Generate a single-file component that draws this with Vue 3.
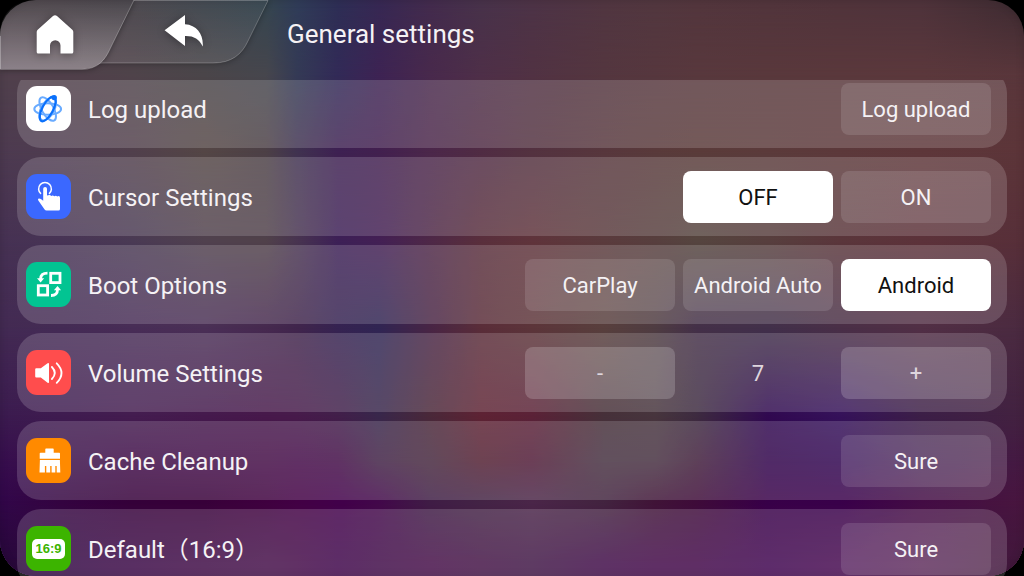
<script setup>
import { reactive } from 'vue'

// Wallpaper: horizontal colour bands that fade into each other from top to bottom.
const stops = [0, 6, 13, 20, 26, 29, 33, 37, 42, 47, 52, 59, 64, 68, 75, 82, 90, 100]
const bands = [
  { y: 1, c: '4d454a 4b444a 474349 3e444c 36454f 303c58 2e2e55 372853 432b4d 48324a 4d3346 513641 52373f 53363d 52353c 51343b 4f333b 3e2b31' },
  { y: 13, c: '50404c 50404a 4f434a 4a4549 46464d 343a55 322a57 3d2353 48294c 4e2f48 513243 54363f 56373e 58383d 59383c 5a383c 5b383c 59363b' },
  { y: 26, c: '4d3a50 4f3d50 51404c 544645 4c4046 403250 3e2152 42204f 4b274a 502c44 533240 57373d 593a3b 5a3b3a 5b3b3b 5c393b 5d373a 5c3539' },
  { y: 42, c: '463153 473455 4a3a54 50414e 50414a 483450 3d2056 432054 4e2847 592f3c 5f343b 5a3b3d 573f3e 55453f 573f3e 5a363b 5c323a 572f39' },
  { y: 57, c: '432a53 442b55 482d57 4a2f56 46294f 40254c 352351 302553 482545 5a2d39 5c353a 583f3d 4e3c42 443048 41304a 492f47 512f45 4a2a40' },
  { y: 72, c: '3b1b4f 3f1c50 441d50 451a4d 47194b 471b4b 421f4a 38274b 4a2839 5e2334 5b2237 463039 47353d 3d2b40 300950 35125a 3c1f47 432240' },
  { y: 80, c: '370e4e 3a104a 3e0a46 410c47 430c46 430a48 420c47 402145 45273d 521f32 501b37 453040 452f40 401d3a 30034b 300550 3c164a 451a42' },
  { y: 87, c: '32074a 340440 350039 380039 3f013f 420044 42004a 42084a 3f1d45 432445 4a2648 42243f 401437 3e0c39 380048 39004a 430c44 48163f' },
  { y: 98, c: '260838 330743 3a0846 3f0b46 430e48 430a48 3f054a 400b48 440e48 431346 401646 400b48 410848 410748 3f044f 45094f 4a1248 40183a' },
]
const bandStyle = (b, i) => {
  const colors = b.c.split(' ').map((hex, k) => `#${hex} ${stops[k]}%`)
  const style = { backgroundImage: `linear-gradient(90deg, ${colors.join(', ')})` }
  if (i > 0) style.maskImage = `linear-gradient(180deg, transparent ${bands[i - 1].y}%, #000 ${b.y}%)`
  return style
}

const rows = reactive([
  { icon: 'log', label: 'Log upload', buttons: ['Log upload'] },
  { icon: 'cursor', label: 'Cursor Settings', buttons: ['OFF', 'ON'], selected: 'OFF' },
  { icon: 'boot', label: 'Boot Options', buttons: ['CarPlay', 'Android Auto', 'Android'], selected: 'Android' },
  { icon: 'volume', label: 'Volume Settings', volume: 7 },
  { icon: 'cache', label: 'Cache Cleanup', buttons: ['Sure'] },
  { icon: 'ratio', label: 'Default（16:9）', buttons: ['Sure'] },
])
const pick = (row, name) => {
  if (row.selected) row.selected = name
}
</script>

<template>
  <div class="screen">
    <div class="wallpaper" aria-hidden="true">
      <div v-for="(b, i) in bands" :key="b.y" class="band" :style="bandStyle(b, i)"></div>
    </div>

    <header class="header">
      <nav class="tabs">
        <svg class="tab-shapes" viewBox="0 0 280 80" aria-hidden="true">
          <defs>
            <linearGradient id="homeFill" x1="0" y1="0" x2="0" y2="1">
              <stop offset="0" stop-color="#fff" stop-opacity="0.02" />
              <stop offset="1" stop-color="#fff" stop-opacity="0.34" />
            </linearGradient>
            <linearGradient id="backFill" x1="0" y1="0" x2="0" y2="1">
              <stop offset="0" stop-color="#fff" stop-opacity="0.03" />
              <stop offset="1" stop-color="#fff" stop-opacity="0.1" />
            </linearGradient>
            <filter id="tabShadow" x="-10%" y="-10%" width="120%" height="130%">
              <feGaussianBlur stdDeviation="3" />
            </filter>
            <clipPath id="outsideTabs">
              <path d="M134 0H280V80H0V69H82C98 69 105 60 110 49Z" />
            </clipPath>
            <clipPath id="belowBack">
              <path d="M268 0H280V80H0V69H82C91 69 98 66 102 63H213C232 63 242 54 248 41Z" />
            </clipPath>
          </defs>
          <g clip-path="url(#belowBack)">
            <path d="M134 0H268L248 41C242 54 232 63 213 63H100Z" opacity="0.4" filter="url(#tabShadow)" />
          </g>
          <g clip-path="url(#outsideTabs)">
            <path d="M134 0H268L248 41C242 54 232 63 213 63H100L110 49Z" fill="url(#backFill)" />
            <path d="M0 0H134L110 49C105 60 98 69 82 69H0Z" opacity="0.5" filter="url(#tabShadow)" />
            <path d="M130 0.5H268L248 41C242 54 232 63 213 63H90" fill="none" stroke="#fff" stroke-opacity="0.24" />
          </g>
          <path d="M0 36C0 14 14 0 36 0H134L110 49C105 60 98 69 82 69H0Z" fill="url(#homeFill)" />
          <path d="M0.5 36V69.5H82C98 69 105 60 110 49L134 0" fill="none" stroke="#fff" stroke-opacity="0.28" />
        </svg>
        <button class="tab home" type="button" aria-label="Home">
          <svg class="glyph" viewBox="0 0 40 40">
            <path fill="#fff" d="M18 1.100Q20 -0.500 22 1.100L37.300 14.700Q38.300 15.600 38.300 17V37Q38.300 38.500 36.800 38.500H25.500V30.500A5.200 5.200 0 0 0 15 30.500V38.500H3.200Q1.700 38.500 1.700 37V17Q1.700 15.600 2.700 14.700Z" />
          </svg>
        </button>
        <button class="tab back" type="button" aria-label="Back">
          <svg class="glyph" viewBox="0 0 40 40">
            <path fill="#fff" d="M0.600 15.200L21 0V9.200C33 10 39.500 19 38.800 31.500C35 24 30 20.800 21 21V31Z" />
          </svg>
        </button>
      </nav>
      <h1 class="title">General settings</h1>
    </header>

    <main class="viewport">
      <ul class="list">
        <li v-for="row in rows" :key="row.label" class="row">
          <span class="icon" :class="row.icon" aria-hidden="true">
            <svg v-if="row.icon === 'log'" viewBox="0 0 45 45" fill="none">
              <g stroke="#69abff" stroke-width="2">
                <ellipse cx="21.700" cy="23" rx="13.400" ry="5.800" />
                <ellipse cx="21.700" cy="23" rx="13.200" ry="5.800" transform="rotate(60 21.700 23)" />
                <ellipse cx="21.700" cy="23" rx="12.600" ry="6.400" transform="rotate(-60 21.700 23)" />
              </g>
              <ellipse cx="21.700" cy="23" rx="13.600" ry="5.400" stroke="#0a70fb" stroke-width="2.200" transform="rotate(-62 21.700 23)" />
              <circle cx="28.200" cy="11.600" r="2.700" fill="#0a70fb" />
            </svg>
            <svg v-else-if="row.icon === 'cursor'" viewBox="0 0 45 45">
              <path d="M15 19.900A6.400 6.400 0 1 1 23 19.900" fill="none" stroke="#fff" stroke-width="1.500" />
              <path fill="#fff" d="M17.200 14.800A1.900 1.900 0 0 1 21 14.800V21.500L23.300 21.100Q24.500 21 25.200 22Q26.700 20.800 28.300 22.200Q30 21.100 31.200 22.400Q34 21.300 34 23.700V35Q34 36.500 32.500 36.500H20.500Q19.300 36.500 18.600 35.500L12.300 26.500Q11.300 24.700 13 24.500Q14.500 24.400 17.200 26.700Z" />
            </svg>
            <svg v-else-if="row.icon === 'boot'" viewBox="0 0 45 45" fill="none" stroke="#fff" stroke-width="2.800">
              <rect x="24.700" y="11.300" width="9.300" height="9.300" />
              <rect x="12.300" y="23.700" width="9.300" height="9.300" />
              <path d="M21.500 11.200C17 11.200 14.600 13 14.600 17M25 33.500C29.500 33.500 31.500 31 31.500 27.500" />
              <path d="M11 16.300H18.200L14.600 20.500ZM27.900 28.300H35.100L31.500 24.100Z" fill="#fff" stroke="none" />
            </svg>
            <svg v-else-if="row.icon === 'volume'" viewBox="0 0 45 45">
              <path fill="#fff" d="M10.200 18.200H14.800L21.600 13.300Q23 12.500 23 14V32Q23 33.500 21.600 32.700L14.800 27.500H10.200Q9.200 27.500 9.200 26.500V19.200Q9.200 18.200 10.200 18.200Z" />
              <path d="M25.900 17Q31.700 23 25.900 29M30.700 13.300Q40.300 23 30.700 32.900" fill="none" stroke="#fff" stroke-width="1.800" stroke-linecap="round" />
            </svg>
            <svg v-else-if="row.icon === 'cache'" viewBox="0 0 45 45" fill="#fff">
              <path d="M13.700 20.700V15.500Q13.700 14.700 14.500 14.700H19.300V11.300Q19.300 10.600 20 10.600H27Q27.700 10.600 27.700 11.300V14.700H33.200Q34 14.700 34 15.500V20.700Z" />
              <path d="M13.900 22.100H33.900L34.300 34.400H30.700V28H29.300V34.400H25.600V28H24.200V34.400H20.300V28H18.900V34.400H13.500Z" />
            </svg>
            <span v-else class="ratio-badge">16:9</span>
          </span>

          <span class="label">{{ row.label }}</span>

          <div v-if="row.icon === 'volume'" class="controls volume-controls">
            <button class="btn" type="button" aria-label="Volume down" @click="row.volume--">-</button>
            <output class="value">{{ row.volume }}</output>
            <button class="btn" type="button" aria-label="Volume up" @click="row.volume++">+</button>
          </div>
          <div v-else class="controls">
            <button
              v-for="name in row.buttons"
              :key="name"
              class="btn"
              :class="{ active: row.selected === name }"
              type="button"
              @click="pick(row, name)"
            >{{ name }}</button>
          </div>
        </li>
      </ul>
    </main>
  </div>
</template>

<style>
body {
  background: #000;
}
</style>

<style scoped>
.screen {
  position: relative;
  display: flex;
  flex-direction: column;
  height: 100vh;
  overflow: hidden;
  color: #f5f2f5;
  font-family: Roboto, "Noto Sans CJK SC", sans-serif;
}
.wallpaper {
  position: absolute;
  inset: 0;
  overflow: hidden;
  border-radius: 36px;
}
.wallpaper::after {
  content: "";
  position: absolute;
  inset: 0;
  border-radius: 36px;
  box-shadow: inset 0 0 8px rgba(0, 0, 0, 0.15);
}
.band {
  position: absolute;
  inset: 0;
}
.header {
  position: relative;
  display: flex;
  flex: none;
  height: 80px;
}
.tabs {
  position: relative;
  display: flex;
  width: 280px;
}
.tab-shapes {
  position: absolute;
  inset: 0;
  width: 280px;
  height: 80px;
}
.tab {
  position: relative;
  height: 70px;
  padding: 0;
  border: 0;
  background: none;
  cursor: pointer;
}
.home {
  width: 110px;
}
.back {
  width: 148px;
}
.glyph {
  display: block;
  width: 40px;
  height: 40px;
  margin: 0 auto;
  filter: drop-shadow(0 1px 4px rgba(0, 0, 0, 0.35));
}
.title {
  margin: 0 0 0 7px;
  font-size: 26px;
  font-weight: 400;
  line-height: 68px;
}
.viewport {
  position: relative;
  flex: 1;
  min-height: 0;
  padding: 0 17px;
  overflow: hidden;
}
.list {
  display: flex;
  flex-direction: column;
  gap: 9px;
  margin: -11px 0 0;
  padding: 0;
  list-style: none;
}
.row {
  display: flex;
  align-items: center;
  box-sizing: border-box;
  height: 79px;
  padding: 0 16px 0 9px;
  border-radius: 24px;
  background: rgba(255, 255, 255, 0.16);
}
.icon {
  display: flex;
  flex: none;
  align-items: center;
  justify-content: center;
  width: 45px;
  height: 45px;
  border-radius: 11px;
}
.icon svg {
  width: 45px;
  height: 45px;
}
.log { background: #fff; }
.cursor { background: #3b68ff; }
.boot { background: #02c492; }
.volume { background: #ff4d4d; }
.cache { background: #ff8a00; }
.ratio { background: #3cb400; }
.ratio-badge {
  width: 33px;
  border-radius: 5px;
  background: #fff;
  color: #3cb400;
  font: 700 13px/20px "Liberation Sans", Arial, sans-serif;
  text-align: center;
}
.label {
  flex: 1;
  margin-left: 17px;
  padding-top: 2px;
  font-size: 24px;
  line-height: 32px;
}
.controls {
  display: flex;
  gap: 8px;
}
.btn,
.value {
  box-sizing: border-box;
  width: 150px;
  height: 52px;
  padding: 2px 0 0;
  font-family: inherit;
  font-size: 22px;
  line-height: 50px;
  text-align: center;
}
.btn {
  border: 0;
  border-radius: 8px;
  background: rgba(255, 255, 255, 0.12);
  color: #f5f2f5;
  cursor: pointer;
}
.btn.active {
  background: #fff;
  color: #111;
}
.volume-controls .btn {
  background: rgba(255, 255, 255, 0.18);
}
.volume-controls .btn,
.value {
  color: #ded6de;
}
</style>
